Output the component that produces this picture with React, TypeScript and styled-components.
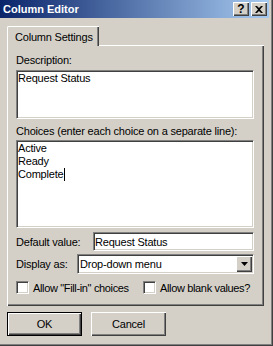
import React from 'react';
import styled, { createGlobalStyle, css } from 'styled-components';

const face = '#D4D0C8';
const shadow = '#808080';
const darkShadow = '#404040';

const GlobalStyle = createGlobalStyle`
  html, body {
    margin: 0;
    padding: 0;
    background: ${face};
  }
`;

const raised = css`
  background: ${face};
  box-shadow: inset 1px 1px #fff, inset -1px -1px ${darkShadow}, inset -2px -2px ${shadow};
`;

const sunken = css`
  background: #fff;
  border: 1px solid;
  border-color: ${shadow} #fff #fff ${shadow};
  box-shadow: inset 1px 1px ${darkShadow}, inset -1px -1px ${face};
`;

const Window = styled.div`
  box-sizing: border-box;
  width: 273px;
  height: 346px;
  display: flex;
  flex-direction: column;
  padding: 0 4px 4px 0;
  background: ${face};
  box-shadow: inset -1px -1px ${darkShadow}, inset -2px -2px ${shadow};
  font-family: 'Liberation Sans', Arial, sans-serif;
  font-size: 11px;
  letter-spacing: -0.2px;
  color: #000;
`;

const TitleBar = styled.div`
  height: 18px;
  display: flex;
  align-items: center;
  padding: 0 2px 0 3px;
  background: linear-gradient(to right, #0a246a, #a6caf0);
  color: #fff;
  font-weight: bold;
  letter-spacing: 0;

  .title {
    flex: 1;
  }
`;

const CaptionButtons = styled.div`
  display: flex;
  gap: 2px;
`;

const CaptionButton = styled.div`
  ${raised};
  width: 16px;
  height: 14px;
  display: flex;
  align-items: center;
  justify-content: center;
  color: #000;
  font-size: 12px;
  font-weight: bold;
  line-height: 14px;
`;

const Body = styled.div`
  flex: 1;
  display: flex;
  flex-direction: column;
  padding: 8px 5px 0 7px;
`;

const Tab = styled.div`
  box-sizing: border-box;
  align-self: flex-start;
  position: relative;
  z-index: 1;
  width: 92px;
  height: 20px;
  margin-bottom: -1px;
  padding-left: 7px;
  display: flex;
  align-items: center;
  background: ${face};
  border-left: 1px solid #fff;
  border-top: 1px solid #fff;
  border-top-left-radius: 2px;
  box-shadow: inset -1px 0 ${darkShadow}, inset -2px 0 ${shadow};
`;

const Panel = styled.div`
  box-sizing: border-box;
  width: 257px;
  display: flex;
  flex-direction: column;
  padding: 8px 10px 12px 8px;
  border-top: 1px solid #fff;
  border-left: 1px solid #fff;
  box-shadow: inset -1px -1px ${darkShadow}, inset -2px -2px ${shadow};
`;

const Label = styled.div<{ $gap?: number }>`
  line-height: 13px;
  height: 13px;
  margin-top: ${({ $gap }) => $gap ?? 0}px;
`;

const TextBox = styled.div<{ $height: number; $gap: number }>`
  ${sunken};
  box-sizing: border-box;
  height: ${({ $height }) => $height}px;
  margin-top: ${({ $gap }) => $gap}px;
  padding: 1px 1px 0 1px;
  line-height: 13px;
`;

const Caret = styled.span`
  display: inline-block;
  width: 1px;
  height: 13px;
  margin-left: 1px;
  vertical-align: top;
  background: #000;
`;

const FieldRow = styled.div<{ $labelWidth: number; $gap: number; $height: number }>`
  display: grid;
  grid-template-columns: ${({ $labelWidth }) => $labelWidth}px 1fr;
  align-items: center;
  height: ${({ $height }) => $height}px;
  margin-top: ${({ $gap }) => $gap}px;
`;

const Input = styled.div`
  ${sunken};
  box-sizing: border-box;
  height: 100%;
  display: flex;
  align-items: center;
  padding-left: 1px;
`;

const Select = styled.div`
  ${sunken};
  box-sizing: border-box;
  height: 100%;
  display: flex;
  align-items: center;
  padding: 1px;

  .value {
    flex: 1;
    padding-left: 1px;
  }
`;

const DropButton = styled.div`
  ${raised};
  width: 16px;
  height: 16px;
  display: flex;
  align-items: center;
  justify-content: center;
`;

const CheckRow = styled.div`
  display: grid;
  grid-template-columns: 127px 1fr;
  margin-top: 7px;
  height: 13px;
`;

const CheckItem = styled.label`
  display: flex;
  align-items: center;
  gap: 4px;
  letter-spacing: -0.35px;
  white-space: nowrap;
`;

const CheckBox = styled.span`
  ${sunken};
  box-sizing: border-box;
  width: 13px;
  height: 13px;
  flex: none;
`;

const ButtonRow = styled.div`
  display: flex;
  gap: 9px;
  margin-top: 6px;
`;

const PushButton = styled.div<{ $default?: boolean }>`
  ${raised};
  box-sizing: border-box;
  width: 75px;
  height: 24px;
  display: flex;
  align-items: center;
  justify-content: center;
  border: ${({ $default }) => ($default ? '1px solid #000' : 'none')};
`;

const CloseGlyph = () => (
  <svg width="8" height="7" viewBox="0 0 8 7">
    <path d="M0 0h2l2 2 2-2h2L5 3.5 8 7H6L4 5 2 7H0l3-3.5z" fill="#000" />
  </svg>
);

const ArrowGlyph = () => (
  <svg width="7" height="4" viewBox="0 0 7 4">
    <path d="M0 0h7L3.5 4z" fill="#000" />
  </svg>
);

export default function App() {
  return (
    <>
      <GlobalStyle />
      <Window>
        <TitleBar>
          <span className="title">Column Editor</span>
          <CaptionButtons>
            <CaptionButton>?</CaptionButton>
            <CaptionButton>
              <CloseGlyph />
            </CaptionButton>
          </CaptionButtons>
        </TitleBar>
        <Body>
          <Tab>Column Settings</Tab>
          <Panel>
            <Label>Description:</Label>
            <TextBox $height={49} $gap={3}>
              Request Status
            </TextBox>
            <Label $gap={6}>Choices (enter each choice on a separate line):</Label>
            <TextBox $height={88} $gap={2}>
              <div>Active</div>
              <div>Ready</div>
              <div>
                Complete
                <Caret />
              </div>
            </TextBox>
            <FieldRow $labelWidth={77} $gap={4} $height={19}>
              <span>Default value:</span>
              <Input>Request Status</Input>
            </FieldRow>
            <FieldRow $labelWidth={61} $gap={3} $height={20}>
              <span>Display as:</span>
              <Select>
                <span className="value">Drop-down menu</span>
                <DropButton>
                  <ArrowGlyph />
                </DropButton>
              </Select>
            </FieldRow>
            <CheckRow>
              <CheckItem>
                <CheckBox />
                Allow "Fill-in" choices
              </CheckItem>
              <CheckItem>
                <CheckBox />
                Allow blank values?
              </CheckItem>
            </CheckRow>
          </Panel>
          <ButtonRow>
            <PushButton $default>OK</PushButton>
            <PushButton>Cancel</PushButton>
          </ButtonRow>
        </Body>
      </Window>
    </>
  );
}
